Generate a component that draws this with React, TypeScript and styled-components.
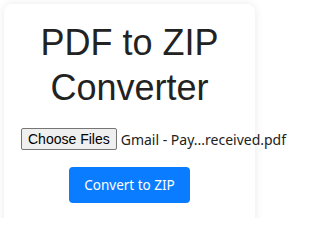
import styled, { createGlobalStyle } from "styled-components";

const GlobalStyle = createGlobalStyle`
    html, body {
        margin: 0;
        padding: 0;
        background: #ffffff;
    }
    body {
        font-family: "Liberation Sans", Arial, sans-serif;
        overflow: hidden;
    }
`;

const Page = styled.div`
    padding: 4px 0 0 4px;
    width: 300px;
    height: 218px;
    box-sizing: border-box;
`;

const Card = styled.div`
    width: 251px;
    height: 240px;
    box-sizing: border-box;
    padding-top: 16px;
    background: #ffffff;
    border-radius: 8px;
    box-shadow: 0 0 8px rgba(0, 0, 0, 0.09);
    display: flex;
    flex-direction: column;
    align-items: center;
`;

const Title = styled.h1`
    margin: 0;
    font-family: "Liberation Sans", Arial, sans-serif;
    font-weight: 400;
    font-size: 36px;
    line-height: 45px;
    color: #222222;
    text-align: center;
`;

const FileField = styled.div`
    margin-top: 18px;
    width: 217px;
    display: flex;
    align-items: center;
    gap: 4px;
    white-space: nowrap;
`;

const PickButton = styled.button`
    flex: none;
    height: 22px;
    padding: 0 6px;
    font-family: "Liberation Sans", Arial, sans-serif;
    font-size: 14px;
    color: #000000;
    background: #efefef;
    border: 1px solid #767676;
    border-radius: 2px;
`;

const FileName = styled.span`
    font-family: "Noto Sans", "Open Sans", sans-serif;
    font-size: 14px;
    color: #222222;
`;

const SubmitButton = styled.button`
    margin-top: 17px;
    width: 121px;
    height: 36px;
    border: none;
    border-radius: 4px;
    background: #0a7cff;
    color: #ffffff;
    font-family: "Noto Sans", "Open Sans", sans-serif;
    font-size: 13.5px;
    cursor: pointer;
`;

function App() {
    return (
        <>
            <GlobalStyle />
            <Page>
                <Card>
                    <Title>
                        PDF to ZIP
                        <br />
                        Converter
                    </Title>
                    <FileField>
                        <PickButton type="button">Choose Files</PickButton>
                        <FileName>Gmail - Pay...received.pdf</FileName>
                    </FileField>
                    <SubmitButton type="button">Convert to ZIP</SubmitButton>
                </Card>
            </Page>
        </>
    );
}

export default App;
